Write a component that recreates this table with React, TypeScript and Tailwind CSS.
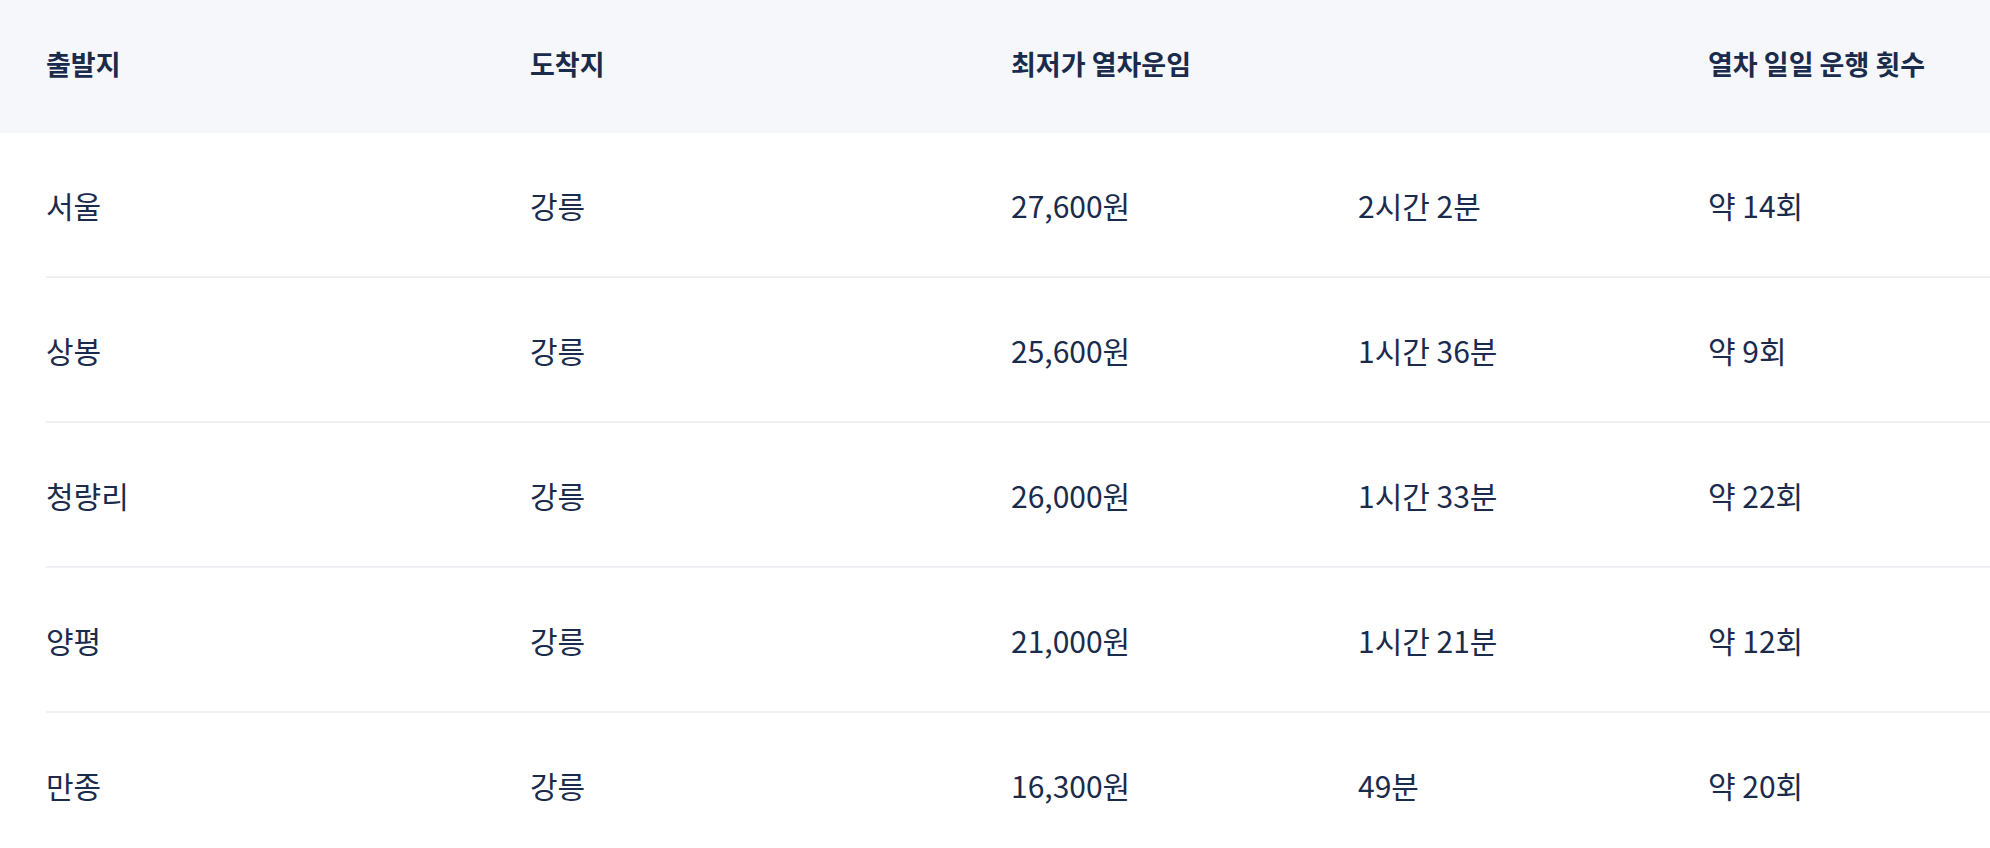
const routes = [
  { from: '서울', to: '강릉', fare: '27,600원', time: '2시간 2분', trips: '약 14회' },
  { from: '상봉', to: '강릉', fare: '25,600원', time: '1시간 36분', trips: '약 9회' },
  { from: '청량리', to: '강릉', fare: '26,000원', time: '1시간 33분', trips: '약 22회' },
  { from: '양평', to: '강릉', fare: '21,000원', time: '1시간 21분', trips: '약 12회' },
  { from: '만종', to: '강릉', fare: '16,300원', time: '49분', trips: '약 20회' },
]

const cols = 'grid grid-cols-[484px_481px_347px_350px_1fr] items-center'

export default function App() {
  return (
    <div
      className="min-h-screen w-full bg-white text-[#1a2b4c]"
      style={{ fontFamily: '"Noto Sans CJK KR", "Noto Sans", sans-serif' }}
    >
      {/* Table header */}
      <div className="bg-[#f5f7fa] pl-[46px]">
        <div className={`${cols} h-[133px] pb-[7px] text-[27px] font-bold leading-none`}>
          <div>출발지</div>
          <div>도착지</div>
          <div>최저가 열차운임</div>
          <div></div>
          <div className="whitespace-nowrap">열차 일일 운행 횟수</div>
        </div>
      </div>

      {/* Rows */}
      <div className="pl-[46px]">
        {routes.map(r => (
          <div key={r.from} className={`${cols} h-[145px] border-b-2 border-[#eef0f4] text-[30px] leading-none`}>
            <div>{r.from}</div>
            <div>{r.to}</div>
            <div>{r.fare}</div>
            <div>{r.time}</div>
            <div>{r.trips}</div>
          </div>
        ))}
      </div>
    </div>
  )
}
